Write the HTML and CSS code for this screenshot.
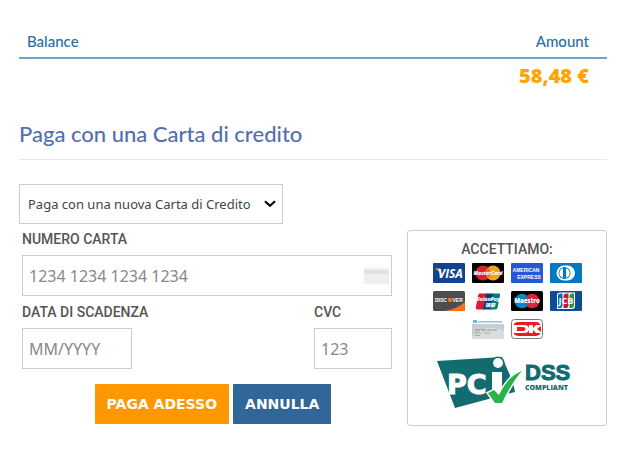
FILE: index.html
```html
<!DOCTYPE html>
<html lang="it">
<head>
<meta charset="utf-8">
<meta name="viewport" content="width=device-width, initial-scale=1">
<title>Paga con una Carta di credito</title>
<link rel="stylesheet" href="styles.css">
</head>
<body>
<main class="page">
  <table class="summary">
    <thead><tr><th scope="col">Balance</th><th scope="col" class="right">Amount</th></tr></thead>
    <tbody><tr><td></td><td class="right total">58,48 €</td></tr></tbody>
  </table>
  <h1 class="title">Paga con una Carta di credito</h1>
  <div class="method">
    <select class="method-select" aria-label="Metodo di pagamento"><option>Paga con una nuova Carta di Credito</option></select>
    <svg class="method-arrow" width="12" height="8" viewBox="0 0 12 8" aria-hidden="true"><path d="M1 1.2l5 4.6 5-4.6" fill="none" stroke="#000" stroke-width="2.2"/></svg>
  </div>
  <div class="columns">
    <form class="card-form">
      <div class="field">
        <label for="number">NUMERO CARTA</label>
        <div class="number-box">
          <input class="input" id="number" type="text" placeholder="1234 1234 1234 1234">
          <svg class="card-hint" width="25" height="16" viewBox="0 0 25 16" aria-hidden="true"><rect width="25" height="16" fill="#efefef"/><rect y="2" width="25" height="4" fill="#e2e2e2"/></svg>
        </div>
      </div>
      <div class="pair">
        <div class="field date">
          <label for="expiry">DATA DI SCADENZA</label>
          <input class="input" id="expiry" type="text" placeholder="MM/YYYY">
        </div>
        <div class="field cvc">
          <label for="cvc">CVC</label>
          <input class="input" id="cvc" type="text" placeholder="123">
        </div>
      </div>
      <div class="actions">
        <button class="button pay" type="button">PAGA ADESSO</button>
        <button class="button cancel" type="button">ANNULLA</button>
      </div>
    </form>
    <aside class="accepted">
      <h2 class="accepted-title">ACCETTIAMO:</h2>
      <div class="cards">
        <svg class="card" viewBox="0 0 32 20" role="img" aria-label="Visa"><rect width="32" height="20" rx="1" fill="#10448f"/><path d="M2.500 5.500h4.500l2.700 7-1.500-1Q6 7.400 2.500 5.900z" fill="#f7a823"/><text class="visa" x="17.500" y="14.500">VISA</text></svg>
        <svg class="card" viewBox="0 0 32 20" role="img" aria-label="MasterCard"><rect width="32" height="20" rx="1" fill="#000"/><circle cx="11" cy="10" r="7.500" fill="#d9222a"/><circle cx="21" cy="10" r="7.500" fill="#f6a021"/><path d="M16 4.500a7.500 7.500 0 0 1 0 11 7.500 7.500 0 0 1 0-11" fill="#e9692c"/><text class="master" x="16" y="12">MasterCard</text></svg>
        <svg class="card" viewBox="0 0 32 20" role="img" aria-label="American Express"><rect width="32" height="20" rx="1" fill="#2557d6"/><text class="amex" x="15" y="9">AMERICAN</text><text class="amex" x="18" y="16">EXPRESS</text></svg>
        <svg class="card" viewBox="0 0 32 20" role="img" aria-label="Diners Club"><rect width="32" height="20" rx="1" fill="#0079be"/><path d="M14 2.500h3.500a7.500 7.500 0 0 1 0 15H14a7.500 7.500 0 0 1 0-15" fill="#fff"/><circle cx="14.500" cy="10" r="6" fill="#0079be"/><path d="M13 5.200a5 5 0 0 0 0 9.600zM16 5.200a5 5 0 0 1 0 9.600z" fill="#fff"/></svg>
        <svg class="card" viewBox="0 0 32 20" role="img" aria-label="Discover"><rect width="32" height="20" rx="1.500" fill="#4d4d4d"/><path d="M32 11v7.500q0 1.500-1.500 1.500H11Q25 17.500 32 11" fill="#f47216"/><text class="discover" x="2" y="11">DISC</text><circle cx="17" cy="9" r="2.300" fill="#f47216"/><text class="discover" x="19.500" y="11">VER</text></svg>
        <svg class="card" viewBox="0 0 32 20" role="img" aria-label="UnionPay"><rect width="32" height="20" fill="#fff"/><path d="M7.500 2.500H15l-3 16H5q-1.600 0-1.200-2l2.300-12q.3-2 1.400-2" fill="#e21836"/><path d="M14 2.500h8l-3 16h-8z" fill="#00447c"/><path d="M21 2.500h6q1.400 0 1 2l-2.500 12q-.4 2-2 2H18z" fill="#007b84"/><text class="union" x="16" y="10">UnionPay</text><text class="union" x="18" y="16">银联</text></svg>
        <svg class="card" viewBox="0 0 32 20" role="img" aria-label="Maestro"><rect width="32" height="20" rx="1.500" fill="#000"/><circle cx="11" cy="10" r="7.300" fill="#0088ca"/><circle cx="21" cy="10" r="7.300" fill="#dc2339"/><path d="M16 4.700a7.300 7.300 0 0 1 0 10.600 7.300 7.300 0 0 1 0-10.600" fill="#655292"/><text class="maestro" x="16" y="12">Maestro</text></svg>
        <svg class="card" viewBox="0 0 32 20" role="img" aria-label="JCB"><rect width="32" height="20" rx="1" fill="#0e4c96"/><path d="M10 1.500h15v13.500q0 3-3 3H7V4.500q0-3 3-3" fill="#fff"/><path d="M10.500 2.500H12.500v11.500q0 3-2.500 3H8V5q0-2.500 2.500-2.500" fill="#0868b1"/><path d="M16.500 2.500H18.500v11.500q0 3-2.500 3H13.500V5q0-2.500 3-2.500" fill="#cf1430"/><path d="M22.500 2.500H24v11.500q0 3-2.500 3H19.500V5q0-2.500 3-2.500" fill="#27963c"/><text class="jcb" x="16" y="13">JCB</text></svg>
        <svg class="card" viewBox="0 0 32 20" role="img" aria-label="Carta generica"><rect width="32" height="20" rx="1" fill="#d9dddf"/><rect width="32" height="5" fill="#fff"/><path d="M1 1h4v3H1z" fill="#76b6e5"/><path d="M6 2.800h24" stroke="#90bfe2" stroke-width="1.500"/><path d="M0 18Q14 3 32 12V5H0z" fill="#c8cdd0"/><path d="M3 11h22" stroke="#878d91" stroke-width="1.200" stroke-dasharray="5 1"/><path d="M3 14h6m3 0h6M3 16.500h5" stroke="#a6abae"/></svg>
        <svg class="card" viewBox="0 0 32 20" role="img" aria-label="Dankort"><rect x=".5" y=".5" width="31" height="19" rx="3" fill="#fff" stroke="#777"/><rect x="2" y="3" width="28" height="14" rx="5" fill="#ed1c24"/><path d="M2 6h11q5 0 5 4t-5 4H2zM18 6h4v3l3-3h5v1l-4 3 4 3v1h-5l-3-3v3h-4z" fill="#fff"/><path d="M6 8h6q2.500 0 2.500 2T12 12H6z" fill="#ed1c24"/></svg>
      </div>
      <svg class="pci" width="136" height="54" viewBox="0 0 136 54" role="img" aria-label="PCI DSS Compliant">
        <path d="M0 4l65-4 11 25 2 10-60 16z" fill="#126b6f"/>
        <text class="pci-text" x="10" y="37">PC</text>
        <path d="M55 15h10v22H55z" fill="#fff"/><circle cx="61" cy="6" r="6.500" fill="#126b6f"/><circle cx="61" cy="6" r="5" fill="#fff"/>
        <path d="M51 36l6-3 5 5Q71 19 85 14Q75 25 65 46h-7z" fill="#29b34a" stroke="#fff" stroke-width="3"/>
        <path d="M51 36l6-3 5 5Q71 19 85 14Q75 25 65 46h-7z" fill="#29b34a"/>
        <text class="dss" x="88" y="23">DSS</text>
        <text class="compliant" x="88" y="33">COMPLIANT</text>
      </svg>
    </aside>
  </div>
</main>
</body>
</html>
```
FILE: styles.css
```css
* { box-sizing: border-box; }
body { margin: 0; background: #fff; color: #555; font-family: Roboto, "Liberation Sans", sans-serif; }
.page { padding: 25px 14px 24px 19px; }
.summary { width: 100%; border-collapse: collapse; }
.summary th { padding: 4px 8px; border-bottom: 2px solid #6fa6c5; color: #276ea3; font: 500 15px/24px Lato, sans-serif; text-align: left; }
.summary td { height: 34px; padding: 0 18px 0 8px; }
.summary .right { padding-right: 18px; text-align: right; }
.summary .total { color: #ffa500; font: 800 20px/34px "Open Sans", sans-serif; }
.title { margin: 24px 0; padding: 2px 0 10px; border-bottom: 1px solid #e9e9e9; color: #5470aa; font: 500 22px/30px Lato, sans-serif; }
.method { position: relative; width: 264px; }
.method-select { display: block; width: 100%; height: 40px; padding: 0 8px; border: 1px solid #ccc; border-radius: 0; background: #fff; color: #444; font: 13px "Noto Sans", sans-serif; appearance: none; }
.method-arrow { position: absolute; top: 16px; right: 7px; pointer-events: none; }
.columns { display: flex; align-items: flex-start; gap: 15px; }
.card-form { flex: 1; padding-left: 3px; }
.field label { display: block; height: 31px; padding-top: 3px; font: 500 14px/24px Roboto, sans-serif; }
.input { display: block; width: 100%; height: 41px; padding: 0 6px; border: 1px solid #ccc; border-radius: 0; background: #fff; color: #555; font: 16px "Noto Sans", sans-serif; }
.input::placeholder { color: #888; opacity: 1; }
.number-box { position: relative; }
.card-hint { position: absolute; top: 13px; right: 3px; }
.pair { display: flex; justify-content: space-between; margin-top: 1px; }
.date .input { width: 110px; }
.date label { white-space: nowrap; }
.cvc { width: 78px; }
.actions { display: flex; justify-content: center; gap: 4px; margin-top: 15px; padding-left: 12px; }
.button { height: 40px; padding: 0 12px; border: 0; border-radius: 1px; color: #fff; font: bold 14px "DejaVu Sans", sans-serif; white-space: nowrap; }
.pay { background: #ff9800; }
.cancel { background: #316698; }
.accepted { width: 200px; margin-top: 6px; padding: 6px 0 14px; border: 1px solid #ccc; border-radius: 3px; text-align: center; }
.accepted-title { margin: 0 0 2px; font: 500 14px/24px Roboto, sans-serif; }
.cards { display: flex; flex-wrap: wrap; justify-content: center; gap: 8px 7px; padding: 0 20px; }
.card { width: 32px; height: 20px; overflow: hidden; }
.card text { fill: #fff; font-family: "Open Sans", sans-serif; font-weight: 800; text-anchor: middle; }
.card .visa { font-size: 12px; font-style: italic; font-weight: 700; }
.card .master { font-size: 5px; font-style: italic; }
.card .amex { font-family: "Liberation Sans", sans-serif; font-size: 5px; font-weight: 700; }
.card .discover { font-family: "Liberation Sans", sans-serif; font-size: 5px; text-anchor: start; }
.card .union { font-family: "Open Sans", "Noto Sans CJK SC", sans-serif; font-size: 5px; font-style: italic; }
.card .maestro { font-size: 6px; }
.card .jcb { font-size: 9px; font-weight: 700; }
.pci { display: block; margin: 18px auto 0 29px; overflow: visible; }
.pci-text { fill: #fff; stroke: #fff; font: 700 27px "DejaVu Sans", sans-serif; }
.dss { fill: #126b6f; stroke: #126b6f; font: 700 22px "Liberation Sans", sans-serif; }
.compliant { fill: #126b6f; font: 800 7px "Open Sans", sans-serif; }
```
